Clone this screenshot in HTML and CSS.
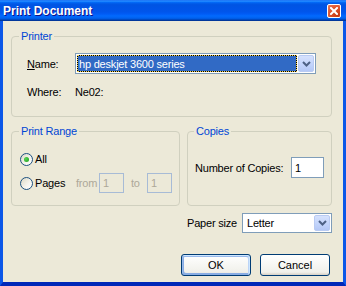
FILE: index.html
```html
<!DOCTYPE html>
<html lang="en">
<head>
    <meta charset="UTF-8">
    <title>Print Document</title>
    <link rel="stylesheet" href="styles.css">
</head>
<body>
    <div class="window">
        <div class="titlebar">
            <span class="title">Print Document</span>
            <button class="close" aria-label="Close">
                <svg width="8" height="8" viewBox="0 0 8 8"><path d="M1 1 L7 7 M7 1 L1 7" stroke="#fff" stroke-width="2" stroke-linecap="square"/></svg>
            </button>
        </div>

        <div class="frame">
            <fieldset class="group printer">
                <legend>Printer</legend>
                <div class="field-row">
                    <label class="lbl"><u>N</u>ame:</label>
                    <div class="combo name-combo">
                        <span class="combo-value selected">hp deskjet 3600 series</span>
                        <span class="drop">
                            <svg width="9" height="6" viewBox="0 0 9 6"><path d="M1 1 L4.5 4.5 L8 1" fill="none" stroke="#4d6185" stroke-width="2"/></svg>
                        </span>
                    </div>
                </div>
                <div class="field-row where-row">
                    <span class="lbl">Where:</span>
                    <span>Ne02:</span>
                </div>
            </fieldset>

            <div class="columns">
                <fieldset class="group range">
                    <legend>Print Range</legend>
                    <div class="range-row">
                        <span class="radio checked"></span>
                        <span>All</span>
                    </div>
                    <div class="range-row">
                        <span class="radio"></span>
                        <span>Pages</span>
                        <span class="muted">from</span>
                        <span class="input disabled">1</span>
                        <span class="muted to">to</span>
                        <span class="input disabled">1</span>
                    </div>
                </fieldset>

                <fieldset class="group copies">
                    <legend>Copies</legend>
                    <div class="copies-row">
                        <span>Number of Copies:</span>
                        <span class="input">1</span>
                    </div>
                </fieldset>
            </div>

            <div class="columns paper-row">
                <div class="paper">
                    <span>Paper size</span>
                    <div class="combo paper-combo">
                        <span class="combo-value">Letter</span>
                        <span class="drop">
                            <svg width="9" height="6" viewBox="0 0 9 6"><path d="M1 1 L4.5 4.5 L8 1" fill="none" stroke="#4d6185" stroke-width="2"/></svg>
                        </span>
                    </div>
                </div>
            </div>

            <div class="buttons">
                <button class="btn default">OK</button>
                <button class="btn">Cancel</button>
            </div>
        </div>
    </div>
</body>
</html>
```

FILE: styles.css
```css
* {
    margin: 0;
    padding: 0;
    box-sizing: border-box;
}

body {
    font-family: 'Liberation Sans', Arial, sans-serif;
    font-size: 11px;
    letter-spacing: -0.2px;
    color: #000;
    background: #ece9d8;
}

.window {
    width: 346px;
    height: 286px;
    display: flex;
    flex-direction: column;
}

/* title bar */
.titlebar {
    height: 21px;
    display: flex;
    align-items: center;
    justify-content: space-between;
    padding: 0 5px 0 3px;
    background: linear-gradient(180deg, #0058ee 0%, #3593ff 4%, #288eff 6%, #127dff 8%, #036ffc 10%, #0262ee 14%, #0057e5 20%, #0054e3 24%, #0055eb 56%, #005bf5 66%, #026afe 76%, #0062ef 86%, #0052d6 92%, #0040ab 94%, #003092 100%);
}

.title {
    color: #fff;
    font-weight: bold;
    font-size: 12px;
    letter-spacing: 0;
    text-shadow: 1px 1px #0f1089;
}

.close {
    width: 14px;
    height: 14px;
    display: flex;
    align-items: center;
    justify-content: center;
    border: 1px solid #fff;
    border-radius: 2px;
    background: radial-gradient(circle at 80% 85%, #c43a12 0%, #dc4f28 50%, #ea7a5a 100%);
}

.frame {
    flex: 1;
    border-left: 3px solid #0b57e8;
    border-right: 3px solid #0b57e8;
    border-bottom: 4px solid #0028b8;
    padding: 9px 11px 0 8px;
}

/* group boxes */
.group {
    border: 1px solid #d0d0bf;
    border-radius: 4px;
}

.group legend {
    color: #0046d5;
    line-height: 13px;
    padding: 0 2px;
}

.printer {
    padding: 10px 15px 17px;
}

.printer legend {
    margin-left: -8px;
}

.field-row {
    display: grid;
    grid-template-columns: 48px 241px;
    align-items: center;
}

.where-row {
    margin-top: 12px;
    line-height: 13px;
}

.columns {
    display: grid;
    grid-template-columns: 169px 145px;
    column-gap: 7px;
    margin-top: 8px;
}

.range {
    padding: 11px 7px 12px 8px;
}

.range legend,
.copies legend {
    margin-left: -1px;
}

.range-row {
    height: 20px;
    display: grid;
    grid-template-columns: 15px 41px 23px 25px 23px 25px;
    align-items: center;
}

.range-row + .range-row {
    margin-top: 4px;
}

.muted {
    color: #aca899;
}

.to {
    padding-left: 7px;
}

.radio {
    width: 13px;
    height: 13px;
    border: 1px solid #1c5180;
    border-radius: 50%;
    background: linear-gradient(135deg, #dcd9c5 0%, #f6f5ef 60%, #fff 100%);
    display: grid;
    place-items: center;
}

.radio.checked::after {
    content: "";
    width: 5px;
    height: 5px;
    border-radius: 50%;
    background: radial-gradient(circle at 35% 35%, #55d551 0%, #21a121 90%);
}

.copies {
    padding: 19px 7px 0 7px;
}

.copies-row {
    display: grid;
    grid-template-columns: 96px 33px;
    align-items: center;
}

/* inputs */
.input {
    height: 21px;
    display: flex;
    align-items: center;
    padding-left: 3px;
    border: 1px solid #7f9db9;
    background: #fff;
}

.input.disabled {
    height: 20px;
    border-color: #a7bbd6;
    background: #ece9d8;
    color: #aca899;
}

.combo {
    display: flex;
    align-items: stretch;
    gap: 1px;
    border: 1px solid #7f9db9;
    background: #fff;
    padding: 1px;
}

.name-combo {
    height: 21px;
}

.combo-value {
    flex: 1;
    display: flex;
    align-items: center;
    padding-left: 3px;
}

.selected {
    color: #fff;
    border: 1px dotted #f3d24e;
    padding-left: 1px;
    background: linear-gradient(#316ac5, #316ac5) padding-box, linear-gradient(#000, #000) border-box;
}

.drop {
    width: 16px;
    display: flex;
    align-items: center;
    justify-content: center;
    border: 1px solid #b9cbf3;
    border-radius: 2px;
    background: linear-gradient(180deg, #d6e2fd 0%, #c1d3fb 60%, #b4c8f6 100%);
}

.paper-row {
    margin-top: 7px;
}

.paper {
    grid-column: 2;
    display: flex;
    align-items: center;
    justify-content: space-between;
}

.paper-combo {
    width: 90px;
    height: 20px;
}

/* buttons */
.buttons {
    display: flex;
    justify-content: flex-end;
    gap: 9px;
    margin-top: 21px;
    padding-right: 2px;
}

.btn {
    width: 70px;
    height: 22px;
    font: inherit;
    border: 1px solid #003c74;
    border-radius: 3px;
    background: linear-gradient(180deg, #fff 0%, #f0f0ea 86%, #d6d0c5 100%);
}

.btn.default {
    box-shadow: inset -1px 1px #cee7ff, inset 1px 2px #98b8ea, inset -2px 2px #bcd4f6, inset 1px -1px #89ade4, inset 2px -2px #89ade4;
}
```
